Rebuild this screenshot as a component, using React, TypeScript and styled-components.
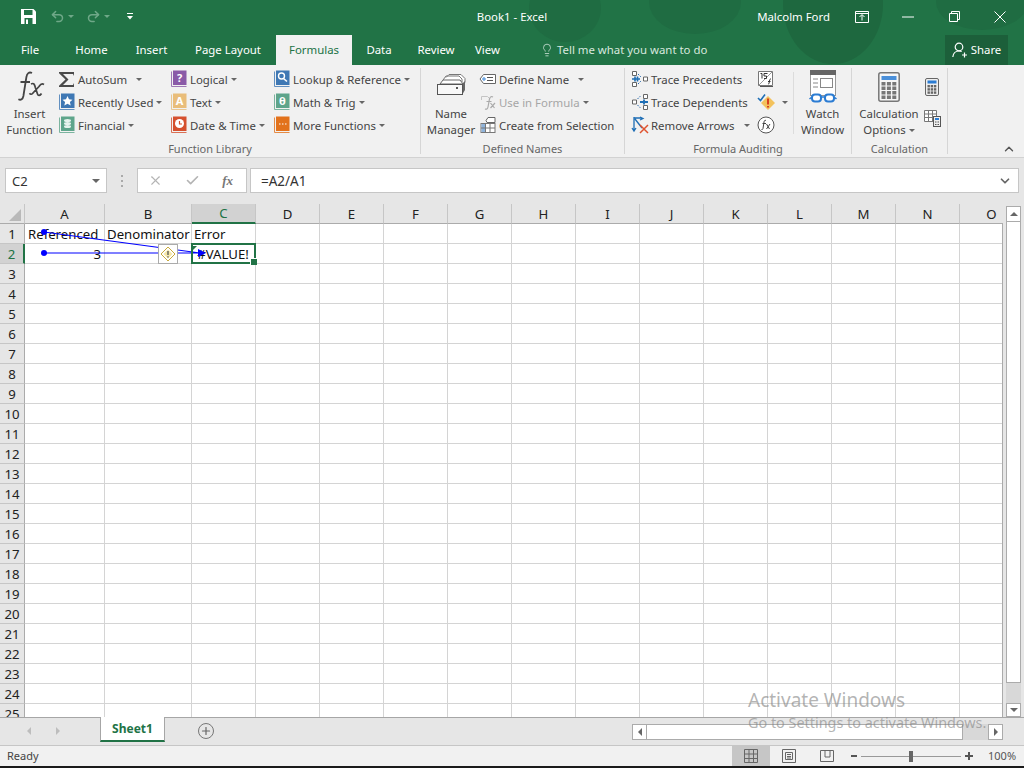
import React from 'react';
import styled, { createGlobalStyle } from 'styled-components';
import { Undo2, Redo2, Lightbulb, ChevronUp, ChevronDown, X, Check, Plus } from 'lucide-react';

const UI_FONT = '"Noto Sans", "Open Sans", "Liberation Sans", sans-serif';
const GREEN = '#217346';

const COLUMNS = ['A', 'B', 'C', 'D', 'E', 'F', 'G', 'H', 'I', 'J', 'K', 'L', 'M', 'N', 'O'];
const ROWS = Array.from({ length: 25 }, (_, i) => i + 1);
const CELLS: Record<string, { text: string; align?: 'left' | 'right' | 'center' }> = {
  A1: { text: 'Referenced' },
  B1: { text: 'Denominator' },
  C1: { text: 'Error' },
  A2: { text: '3', align: 'right' },
  C2: { text: '#VALUE!', align: 'center' },
};

const GlobalStyle = createGlobalStyle`
  html, body { margin: 0; padding: 0; background: #1a1a1a; }
  * { box-sizing: border-box; }
`;

const Book = ({ color, children }: { color: string; children?: React.ReactNode }) => (
  <svg width="17" height="18" viewBox="0 0 17 18">
    <path d="M1 1.500h1v14.500h14.500v1H2q-1 0-1-1z" fill={color} opacity="0.8" />
    <rect x="3" y="0.500" width="13.500" height="14.500" fill={color} />
    {children}
  </svg>
);

const BookLetter = styled.text`
  font: bold 11px ${UI_FONT};
  fill: #fff;
  text-anchor: middle;
`;

const Sigma = () => (
  <svg width="17" height="17" viewBox="0 0 17 17">
    <path d="M1 1h15v4l-1-2H5l5.500 5.500L5 14h10l1-2v4H1v-1.200L7.500 8.500 1 2.200z" fill="#4a4a4a" />
  </svg>
);

const FxLarge = () => (
  <svg width="34" height="34" viewBox="0 0 34 34">
    <path d="M19 3c-3-1.500-5 .5-5.600 4l-3 19c-.6 3-2.400 4.500-5 3.300M7.500 12h9.500" fill="none" stroke="#444" strokeWidth="1.800" />
    <path d="M18 14c3-1.500 3.600.5 4.500 4l2 6c.6 2 2.500 2 4-.5M31 14.500c-2-1.300-3.500-.3-5 2l-6 6.500c-1 1.400-2.500 1.800-3.500.3" fill="none" stroke="#444" strokeWidth="1.700" />
  </svg>
);

const NameManagerIcon = () => (
  <svg width="32" height="32" viewBox="0 0 32 32">
    <path d="M8 9l3-4h13l3 3v3M11 6.500l3-3h12l4 4v4" fill="#fff" stroke="#777" />
    <path d="M27 13l3-3v9l-3 5z" fill="#666" />
    <path d="M5 13l3-4h17l3 4z" fill="#fff" stroke="#666" />
    <rect x="2.500" y="13.500" width="25" height="10" fill="#f8f8f8" stroke="#555" />
    <rect x="21" y="16" width="2" height="2" fill="#555" />
  </svg>
);

const TagIcon = () => (
  <svg width="18" height="16" viewBox="0 0 18 16">
    <path d="M4.500 3.500H16.500v9H4.500L1 8z" fill="#fff" stroke="#666" />
    <circle cx="5" cy="8" r="1.200" fill="none" stroke="#2b7cd3" />
    <path d="M8 6.500h6M8 9.500h6" stroke="#555" />
  </svg>
);

const UseFormulaIcon = () => (
  <svg width="18" height="18" viewBox="0 0 18 18">
    <path d="M2.500 7V3.500h6l2 2" fill="none" stroke="#c4c4c4" />
    <path d="M14 4c-2-1-3 0-3.500 2l-1.500 8c-.4 2-1.500 2.500-3 2M7.500 8.500h5M11.500 10l4 5M16 10l-4.500 5" fill="none" stroke="#aaa" strokeWidth="1.200" />
  </svg>
);

const CreateSelectionIcon = () => (
  <svg width="18" height="18" viewBox="0 0 18 18">
    <path d="M7 4.500l2-3h7v5H8z" fill="#fff" stroke="#666" />
    <rect x="2" y="7.500" width="14" height="9" fill="#fff" stroke="#777" />
    <rect x="2.500" y="8" width="4" height="8" fill="#8fb4dc" />
    <path d="M6.500 8v8M11 8v8M2 12h14" stroke="#777" />
  </svg>
);

const TracePrecedentsIcon = () => (
  <svg width="18" height="18" viewBox="0 0 18 18">
    <path d="M1.500 1.500h4v4h-4zM1.500 12.500h4v4h-4zM12.500 7h4v4h-4z" fill="#fff" stroke="#666" />
    <path d="M7 4l3 3M7 14l3-3" stroke="#2b6cb0" strokeDasharray="1.500 1" />
    <path d="M1 9h8M6.500 6.500v5M4 6.500v5" stroke="#1e6eb5" strokeWidth="1.600" />
  </svg>
);

const TraceDependentsIcon = () => (
  <svg width="18" height="18" viewBox="0 0 18 18">
    <path d="M1.500 7h4v4h-4zM12.500 1.500h4v4h-4zM12.500 12.500h4v4h-4z" fill="#fff" stroke="#666" />
    <path d="M6.500 6l3-3M6.500 12l3 3" stroke="#2b6cb0" strokeDasharray="1.500 1" />
    <path d="M9 9h8M13 6.500v5" stroke="#1e6eb5" strokeWidth="1.800" />
  </svg>
);

const RemoveArrowsIcon = () => (
  <svg width="20" height="18" viewBox="0 0 20 18">
    <path d="M3 1v13M1 12l2 3 2-3M3 2h8M9 1l3 1.500L9 4M4 3l7 9" fill="none" stroke="#1e6eb5" strokeWidth="1.300" />
    <path d="M9 9l8 8M17 9l-8 8" stroke="#e0532f" strokeWidth="1.500" />
  </svg>
);

const ShowFormulasIcon = () => (
  <svg width="18" height="18" viewBox="0 0 18 18">
    <path d="M1.500 1.500h14v14l-14 0z" fill="#fff" stroke="#777" />
    <path d="M1.500 15.500L15.500 1.500" stroke="#999" />
    <path d="M3.500 3.500h1.500v5M7 3.500h3.500M7 3.500v2.500h2.500v2.500H7M11 14c1 0 1-.5 1.300-2l.4-2c.3-1.300 1-1 1.300-1M11 11.500h2.500" fill="none" stroke="#333" />
    <path d="M16 16.500H3" stroke="#555" />
  </svg>
);

const ErrorCheckIcon = () => (
  <svg width="20" height="18" viewBox="0 0 20 18">
    <path d="M1 5l2.500 2.500L8 1.500" fill="none" stroke="#1e6eb5" strokeWidth="1.600" />
    <path d="M11 3l7 7-7 7-7-7z" fill="#f3c25c" />
    <path d="M11 5.500v6M11 13v1.500" stroke="#d8401f" strokeWidth="2" />
  </svg>
);

const EvaluateIcon = () => (
  <svg width="18" height="18" viewBox="0 0 18 18">
    <circle cx="9" cy="9" r="8" fill="#fff" stroke="#555" />
    <path d="M9 4.500c-1.200-.5-1.800.2-2 1.500l-1 6.500c-.2 1-.8 1.200-1.500 1M5.500 7.500h3.500M9.500 8l3 5M13 8l-3.500 5" fill="none" stroke="#444" />
  </svg>
);

const WatchWindowIcon = () => (
  <svg width="28" height="36" viewBox="0 0 28 36">
    <rect x="1.500" y="1.500" width="25" height="25" fill="#fff" stroke="#999" />
    <rect x="1" y="1" width="26" height="5" fill="#666" />
    <rect x="11.500" y="9.500" width="12" height="9" fill="#fff" stroke="#888" />
    <path d="M4 10h5M4 14h5M4 18h5" stroke="#888" />
    <rect x="3" y="25.500" width="9" height="7" rx="3" fill="#fff" stroke="#2b7cd3" strokeWidth="2" />
    <rect x="16" y="25.500" width="9" height="7" rx="3" fill="#fff" stroke="#2b7cd3" strokeWidth="2" />
    <path d="M12 28h4M3 28L0.500 30M25 28l2.500 2" stroke="#2b7cd3" strokeWidth="1.600" />
  </svg>
);

const CalcLargeIcon = () => (
  <svg width="22" height="30" viewBox="0 0 22 30">
    <rect x="0.800" y="0.800" width="20.400" height="28.400" rx="2" fill="#f6f6f6" stroke="#777" strokeWidth="1.500" />
    <rect x="3.500" y="4" width="15" height="4" fill="#2b7cd3" opacity="0.85" />
    {[0, 1, 2].map((c) =>
      [0, 1, 2, 3].map((r) => <rect key={`${c}${r}`} x={3.5 + c * 5.4} y={10 + r * 4.5} width="4" height="3.500" fill="#777" />),
    )}
  </svg>
);

const CalcSmallIcon = () => (
  <svg width="14" height="18" viewBox="0 0 14 18">
    <rect x="0.500" y="0.500" width="13" height="17" rx="1.500" fill="#eee" stroke="#666" />
    <rect x="2.500" y="2.500" width="9" height="3" fill="#2b7cd3" />
    {[0, 1, 2].map((c) =>
      [0, 1, 2].map((r) => <rect key={`${c}${r}`} x={2.5 + c * 3.2} y={7 + r * 3.2} width="2.400" height="2.400" fill="#666" />),
    )}
  </svg>
);

const CalcSheetIcon = () => (
  <svg width="18" height="18" viewBox="0 0 18 18">
    <path d="M1.500 1.500h12v11h-12zM1.500 5h12M1.500 8.500h12M5.500 1.500v11M9.500 1.500v11" fill="#fff" stroke="#777" />
    <rect x="10.500" y="7.500" width="7" height="10" fill="#eee" stroke="#555" />
    <rect x="12" y="9" width="4" height="2" fill="#2b7cd3" />
    <path d="M12 13h1.500M14.500 13H16M12 15.500h1.500M14.500 15.500H16" stroke="#555" />
  </svg>
);

const Header = styled.header`
  position: relative;
  height: 65px;
  background: ${GREEN};
  color: #fff;
  overflow: hidden;
`;

const Blobs = styled.svg`
  position: absolute;
  inset: 0;
  pointer-events: none;
`;

const TitleBar = styled.div`
  position: relative;
  height: 35px;
  display: grid;
  grid-template-columns: 1fr auto 1fr;
  align-items: center;
  padding-bottom: 2px;
`;

const Qat = styled.div`
  display: flex;
  align-items: center;
  padding-left: 21px;
`;

const QatSlot = styled.span<{ $w: number }>`
  display: inline-flex;
  align-items: center;
  width: ${(p) => p.$w}px;
`;

const QatCaret = styled.span`
  width: 0;
  height: 0;
  margin-left: 3px;
  border: 3px solid transparent;
  border-top: 3px solid #6fa888;
  border-bottom: 0;
`;

const Title = styled.div`
  font: 11.4px ${UI_FONT};
`;

const TitleRight = styled.div`
  display: flex;
  align-items: center;
  justify-content: flex-end;
  font: 11.4px ${UI_FONT};
`;

const UserName = styled.span`
  margin-right: 25px;
`;

const WinButton = styled.span<{ $w: number; $mr?: number }>`
  display: inline-flex;
  justify-content: center;
  align-items: center;
  width: ${(p) => p.$w}px;
  margin-right: ${(p) => p.$mr ?? 0}px;
`;

const TabRow = styled.nav`
  position: relative;
  height: 30px;
  display: flex;
  align-items: stretch;
  font: 11.4px ${UI_FONT};
`;

const Tab = styled.div<{ $active?: boolean; $w: number }>`
  width: ${(p) => p.$w}px;
  padding-bottom: 1px;
  display: flex;
  align-items: center;
  justify-content: center;
  background: ${(p) => (p.$active ? '#f1f1f1' : 'transparent')};
  color: ${(p) => (p.$active ? GREEN : '#fff')};
`;

const TellMe = styled.div`
  display: flex;
  align-items: center;
  gap: 3px;
  margin-left: 31px;
  padding-bottom: 1px;
  color: #d8e8df;
  flex: 1;
`;

const ShareBox = styled.div`
  width: 63px;
  margin-right: 16px;
  padding-bottom: 1px;
  display: flex;
  align-items: center;
  justify-content: center;
  gap: 3px;
  background: #1c5f3a;
`;

const Ribbon = styled.section`
  position: relative;
  height: 93px;
  display: flex;
  background: #f1f1f1;
  border-bottom: 1px solid #d2d2d2;
  color: #444;
  font: 11.4px ${UI_FONT};
`;

const Group = styled.div<{ $w: number }>`
  position: relative;
  width: ${(p) => p.$w}px;
  margin-top: 3px;
  margin-bottom: 3px;
  display: flex;
  flex-direction: column;
  border-right: 1px solid #d6d6d6;
`;

const GroupBody = styled.div`
  display: flex;
  height: 74px;
`;

const GroupLabel = styled.div`
  height: 12px;
  line-height: 14px;
  text-align: center;
  font-size: 11px;
  color: #666;
`;

const BigButton = styled.div<{ $w: number; $ml?: number }>`
  width: ${(p) => p.$w}px;
  margin-left: ${(p) => p.$ml ?? 0}px;
  flex-shrink: 0;
  display: flex;
  flex-direction: column;
  align-items: center;
  text-align: center;
  line-height: 16px;
`;

const BigIcon = styled.div`
  height: 38px;
  display: flex;
  align-items: center;
  justify-content: center;
`;

const SmallCol = styled.div<{ $w: number }>`
  width: ${(p) => p.$w}px;
  flex-shrink: 0;
`;

const SmallBtn = styled.div<{ $disabled?: boolean }>`
  height: 23px;
  padding-bottom: 1px;
  display: flex;
  align-items: center;
  white-space: nowrap;
  color: ${(p) => (p.$disabled ? '#a6a6a6' : '#444')};
`;

const SmallIcon = styled.span`
  width: 20px;
  flex-shrink: 0;
  display: flex;
  align-items: center;
`;

const Caret = styled.span<{ $ml?: number }>`
  display: inline-block;
  width: 0;
  height: 0;
  margin-left: ${(p) => p.$ml ?? 3}px;
  vertical-align: middle;
  border: 3px solid transparent;
  border-top: 3px solid #666;
  border-bottom: 0;
`;

const VRule = styled.div`
  width: 1px;
  height: 62px;
  margin: 4px 6px 0 0;
  background: #dcdcdc;
  flex-shrink: 0;
`;

const CalcCol = styled.div`
  width: 18px;
  padding-top: 10px;
  display: flex;
  flex-direction: column;
  align-items: center;
  gap: 13px;
`;

const Collapse = styled.span`
  position: absolute;
  right: 8px;
  bottom: 1px;
  color: #555;
  display: flex;
`;

const FormulaArea = styled.div`
  height: 46px;
  display: flex;
  align-items: center;
  padding: 0 5px 1px;
  background: #e6e6e6;
  font: 13px ${UI_FONT};
  color: #333;
`;

const InputBox = styled.div`
  height: 25px;
  background: #fff;
  border: 1px solid #c6c6c6;
  display: flex;
  align-items: center;
`;

const NameBox = styled(InputBox)`
  width: 102px;
  padding: 0 6px;
  justify-content: space-between;
`;

const Grip = styled.span`
  width: 2px;
  height: 12px;
  margin: 0 14px 0 14px;
  background: repeating-linear-gradient(#aaa 0 2px, transparent 2px 5px);
`;

const FnButtons = styled(InputBox)`
  width: 110px;
  margin-right: 3px;
  justify-content: space-between;
  padding: 0 13px 0 10px;
  color: #b4b4b4;
`;

const FxText = styled.span`
  font: italic bold 13px "Liberation Serif", serif;
  color: #777;
`;

const FormulaInput = styled(InputBox)`
  flex: 1;
  padding: 0 6px 0 10px;
  justify-content: space-between;
  font-size: 13.5px;
`;

const SheetArea = styled.div`
  height: 513px;
  display: flex;
  background: #e6e6e6;
`;

const Sheet = styled.div`
  position: relative;
  width: 1003px;
  overflow: hidden;
  flex-shrink: 0;
  background: #fff;
  &::after {
    content: '';
    position: absolute;
    top: 19px;
    bottom: 0;
    right: 0;
    width: 1px;
    background: #ababab;
  }
`;

const SheetGrid = styled.div`
  width: 1024px;
  display: grid;
  grid-template-columns: 25px 80px 87px repeat(13, 64px);
  grid-auto-rows: 20px;
  font: 13.2px ${UI_FONT};
  color: #111;
`;

const Corner = styled.div`
  position: relative;
  background: #e6e6e6;
  border-right: 1px solid #c6c6c6;
  border-bottom: 1px solid #ababab;
  &::after {
    content: '';
    position: absolute;
    right: 3px;
    bottom: 2px;
    border-style: solid;
    border-width: 0 0 12px 12px;
    border-color: transparent transparent #b9b9b9 transparent;
  }
`;

const ColHead = styled.div<{ $sel?: boolean }>`
  display: flex;
  align-items: center;
  justify-content: center;
  background: ${(p) => (p.$sel ? '#d2d2d2' : '#e6e6e6')};
  color: ${(p) => (p.$sel ? GREEN : '#222')};
  border-right: 1px solid #c6c6c6;
  border-bottom: ${(p) => (p.$sel ? `2px solid ${GREEN}` : '1px solid #ababab')};
`;

const RowHead = styled.div<{ $sel?: boolean }>`
  display: flex;
  align-items: center;
  justify-content: center;
  padding-top: 1px;
  background: ${(p) => (p.$sel ? '#d2d2d2' : '#e6e6e6')};
  color: ${(p) => (p.$sel ? GREEN : '#222')};
  border-right: ${(p) => (p.$sel ? `2px solid ${GREEN}` : '1px solid #ababab')};
  border-bottom: 1px solid #c6c6c6;
`;

const Cell = styled.div<{ $align?: string; $first?: boolean }>`
  padding: 0 3px 0 ${(p) => (p.$first ? 3 : 2)}px;
  line-height: 21px;
  white-space: nowrap;
  text-align: ${(p) => p.$align ?? 'left'};
  border-right: 1px solid #d4d4d4;
  border-bottom: 1px solid #d4d4d4;
`;

const SelectedCell = styled.div`
  position: absolute;
  left: 191px;
  top: 39px;
  width: 65px;
  height: 21px;
  border: 2px solid ${GREEN};
  pointer-events: none;
  &::after {
    content: '';
    position: absolute;
    right: -3px;
    bottom: -3px;
    width: 6px;
    height: 6px;
    background: ${GREEN};
    border: 1px solid #fff;
    border-right: 0;
    border-bottom: 0;
  }
`;

const ErrorFlag = styled.span`
  position: absolute;
  left: 193px;
  top: 42px;
  border-style: solid;
  border-width: 4px 4px 0 0;
  border-color: ${GREEN} transparent transparent transparent;
`;

const Arrows = styled.svg`
  position: absolute;
  left: 0;
  top: 0;
  pointer-events: none;
`;

const SmartTag = styled.div`
  position: absolute;
  left: 158px;
  top: 40px;
  width: 20px;
  height: 20px;
  display: flex;
  align-items: center;
  justify-content: center;
  background: #fff;
  border: 1px solid #ababab;
`;

const VScroll = styled.div`
  flex: 1;
  display: flex;
  flex-direction: column;
  padding: 2px 3px 0;
`;

const ScrollBtn = styled.div<{ $h: number }>`
  height: ${(p) => p.$h}px;
  flex-shrink: 0;
  display: flex;
  align-items: center;
  justify-content: center;
  background: #fff;
  border: 1px solid #ababab;
`;

const VThumb = styled.div`
  height: 461px;
  background: #fff;
  border: 1px solid #ababab;
  border-top: 0;
  flex-shrink: 0;
`;

const VTrack = styled.div`
  flex: 1;
  background: #d8d8d8;
`;

const TriUp = styled.span`
  border: 4px solid transparent;
  border-bottom: 4px solid #666;
  border-top: 0;
`;

const TriDown = styled.span`
  border: 4px solid transparent;
  border-top: 4px solid #666;
  border-bottom: 0;
`;

const TriLeft = styled.span<{ $c?: string }>`
  border: 4px solid transparent;
  border-right: 4px solid ${(p) => p.$c ?? '#666'};
  border-left: 0;
`;

const TriRight = styled.span<{ $c?: string }>`
  border: 4px solid transparent;
  border-left: 4px solid ${(p) => p.$c ?? '#666'};
  border-right: 0;
`;

const SheetTabs = styled.div`
  height: 28px;
  display: flex;
  background: #e6e6e6;
  border-top: 1px solid #a6a6a6;
  font: 12px ${UI_FONT};
`;

const TabNav = styled.div`
  width: 100px;
  display: flex;
  align-items: center;
  padding: 0 0 2px 27px;
  gap: 25px;
  flex-shrink: 0;
`;

const SheetTab = styled.div`
  width: 65px;
  height: 25px;
  margin-top: -1px;
  display: flex;
  align-items: center;
  justify-content: center;
  background: #fff;
  border-left: 1px solid #a6a6a6;
  border-right: 1px solid #a6a6a6;
  border-bottom: 2px solid ${GREEN};
  color: ${GREEN};
  font-weight: 700;
`;

const AddSheet = styled.div`
  width: 16px;
  height: 16px;
  margin: 5px 0 0 33px;
  border: 1.5px solid #777;
  border-radius: 50%;
  color: #666;
  display: flex;
  align-items: center;
  justify-content: center;
`;

const HScroll = styled.div`
  margin: 6px 21px 0 auto;
  width: 371px;
  height: 16px;
  display: flex;
`;

const HBtn = styled.div`
  width: 15px;
  flex-shrink: 0;
  display: flex;
  align-items: center;
  justify-content: center;
  background: #fff;
  border: 1px solid #ababab;
`;

const HThumb = styled.div`
  width: 316px;
  background: #fff;
  border-top: 1px solid #ababab;
  border-bottom: 1px solid #ababab;
  border-right: 1px solid #ababab;
`;

const HTrack = styled.div`
  flex: 1;
  background: #d8d8d8;
`;

const StatusBar = styled.footer`
  height: 21px;
  display: flex;
  align-items: stretch;
  background: #f1f1f1;
  border-top: 1px solid #c6c6c6;
  color: #444;
  font: 11px ${UI_FONT};
`;

const Ready = styled.div`
  width: 732px;
  padding: 0 0 2px 7px;
  display: flex;
  align-items: center;
`;

const ViewBtn = styled.div<{ $active?: boolean }>`
  width: 38px;
  display: flex;
  align-items: center;
  justify-content: center;
  background: ${(p) => (p.$active ? '#c6c6c6' : 'transparent')};
`;

const ZoomArea = styled.div`
  flex: 1;
  display: flex;
  align-items: center;
  padding-left: 5px;
  color: #555;
`;

const ZoomTrack = styled.div`
  position: relative;
  width: 100px;
  height: 1px;
  margin: 0 4px;
  background: #999;
`;

const ZoomThumb = styled.span`
  position: absolute;
  left: 48px;
  top: -5px;
  width: 4px;
  height: 11px;
  background: #666;
`;

const ZoomValue = styled.span`
  margin-left: 15px;
  padding-bottom: 2px;
`;

const Taskbar = styled.div`
  height: 2px;
  background: #1a1a1a;
`;

const Watermark = styled.div`
  position: absolute;
  left: 748px;
  top: 688px;
  color: rgba(130, 130, 130, 0.6);
  font-family: ${UI_FONT};
  pointer-events: none;
`;

const WatermarkTitle = styled.div`
  font-size: 19px;
  line-height: 25px;
`;

const WatermarkSub = styled.div`
  font-size: 14.4px;
  line-height: 20px;
  white-space: nowrap;
`;

const Page = styled.div`
  position: relative;
  width: 1024px;
  height: 768px;
  overflow: hidden;
`;

const TABS: [string, number, boolean?][] = [
  ['File', 60],
  ['Home', 63],
  ['Insert', 57],
  ['Page Layout', 96],
  ['Formulas', 76, true],
  ['Data', 54],
  ['Review', 60],
  ['View', 43],
];

const App = () => (
  <Page>
    <GlobalStyle />
    <Header>
      <Blobs width="1024" height="65" viewBox="0 0 1024 65">
        <ellipse cx="565" cy="8" rx="36" ry="34" fill="#1f6c42" />
        <ellipse cx="695" cy="2" rx="46" ry="32" fill="#1f6c42" />
        <ellipse cx="833" cy="4" rx="50" ry="60" fill="#1e683f" />
        <ellipse cx="982" cy="2" rx="46" ry="28" fill="#1f6c42" />
      </Blobs>
      <TitleBar>
        <Qat>
          <QatSlot $w={29}>
            <svg width="15" height="15" viewBox="0 0 15 15">
              <path d="M0 0h12.500L15 2.500V15H0z" fill="#fff" />
              <rect x="3" y="1" width="8.500" height="5" fill={GREEN} />
              <rect x="3.500" y="9" width="8" height="6" fill={GREEN} />
              <rect x="5" y="10.500" width="2" height="4.500" fill="#fff" />
            </svg>
          </QatSlot>
          <QatSlot $w={36}>
            <Undo2 size={15} color="#6fa888" strokeWidth={2.4} />
            <QatCaret />
          </QatSlot>
          <QatSlot $w={41}>
            <Redo2 size={15} color="#6fa888" strokeWidth={2.4} />
            <QatCaret />
          </QatSlot>
          <svg width="7" height="7" viewBox="0 0 7 7">
            <path d="M0 0h6v1H0zM0 3h6L3 6.500z" fill="#fff" />
          </svg>
        </Qat>
        <Title>Book1 - Excel</Title>
        <TitleRight>
          <UserName>Malcolm Ford</UserName>
          <WinButton $w={14} $mr={15}>
            <svg width="14" height="12" viewBox="0 0 14 12">
              <path d="M.5.500h13v11H.500zM7 9.500V4M4.500 6L7 3.500 9.500 6M.5 2.500h13" fill="none" stroke="#fff" />
            </svg>
          </WinButton>
          <WinButton $w={48}>
            <svg width="12" height="2" viewBox="0 0 12 2">
              <path d="M0 1h12" stroke="#fff" />
            </svg>
          </WinButton>
          <WinButton $w={44}>
            <svg width="11" height="11" viewBox="0 0 11 11">
              <path d="M.5 2.500h8v8h-8zM2.500 2.500v-2h8v8h-2" fill="none" stroke="#fff" />
            </svg>
          </WinButton>
          <WinButton $w={48}>
            <svg width="12" height="12" viewBox="0 0 12 12">
              <path d="M.5.500l11 11M11.500.500l-11 11" stroke="#fff" />
            </svg>
          </WinButton>
        </TitleRight>
      </TitleBar>
      <TabRow>
        {TABS.map(([name, w, active]) => (
          <Tab key={name} $w={w} $active={active}>
            {name}
          </Tab>
        ))}
        <TellMe>
          <Lightbulb size={14} strokeWidth={1.3} />
          Tell me what you want to do
        </TellMe>
        <ShareBox>
          <svg width="16" height="16" viewBox="0 0 16 16">
            <circle cx="7" cy="5" r="3.800" fill="none" stroke="#fff" strokeWidth="1.200" />
            <path d="M.8 15c.5-4 3-6 6.200-6 1 0 2 .2 2.700.6M12.500 10.500v5M10 13h5" fill="none" stroke="#fff" strokeWidth="1.200" />
          </svg>
          Share
        </ShareBox>
      </TabRow>
    </Header>

    <Ribbon>
      <Group $w={421}>
        <GroupBody>
          <BigButton $w={49} $ml={5}>
            <BigIcon>
              <FxLarge />
            </BigIcon>
            Insert
            <br />
            Function
          </BigButton>
          <SmallCol $w={4} />
          <SmallCol $w={112}>
            <SmallBtn>
              <SmallIcon><Sigma /></SmallIcon>AutoSum<Caret $ml={9} />
            </SmallBtn>
            <SmallBtn>
              <SmallIcon>
                <Book color="#3f78b4">
                  <path d="M9.500 3l1.500 3.300 3.500.4-2.600 2.300.8 3.500-3.200-1.800-3.200 1.800.8-3.500-2.600-2.300 3.500-.4z" fill="#fff" />
                </Book>
              </SmallIcon>
              Recently Used<Caret />
            </SmallBtn>
            <SmallBtn>
              <SmallIcon>
                <Book color="#5ea58b">
                  <ellipse cx="9.500" cy="4.500" rx="3.500" ry="1.500" fill="#e8f3ee" />
                  <ellipse cx="9.500" cy="7.500" rx="3.500" ry="1.500" fill="#e8f3ee" />
                  <ellipse cx="9.500" cy="10.500" rx="3.500" ry="1.500" fill="#e8f3ee" />
                </Book>
              </SmallIcon>
              Financial<Caret />
            </SmallBtn>
          </SmallCol>
          <SmallCol $w={103}>
            <SmallBtn>
              <SmallIcon>
                <Book color="#8a5aa8"><BookLetter x="9.500" y="12">?</BookLetter></Book>
              </SmallIcon>
              Logical<Caret />
            </SmallBtn>
            <SmallBtn>
              <SmallIcon>
                <Book color="#e9bd7a"><BookLetter x="9.500" y="12">A</BookLetter></Book>
              </SmallIcon>
              Text<Caret />
            </SmallBtn>
            <SmallBtn>
              <SmallIcon>
                <Book color="#d5502e">
                  <circle cx="9.500" cy="7.500" r="4.500" fill="#fff" />
                  <path d="M9.500 5v3h2.500" fill="none" stroke="#d5502e" strokeWidth="1.200" />
                </Book>
              </SmallIcon>
              Date &amp; Time<Caret />
            </SmallBtn>
          </SmallCol>
          <SmallCol $w={140}>
            <SmallBtn>
              <SmallIcon>
                <Book color="#3f78b4">
                  <circle cx="8.500" cy="6" r="3" fill="none" stroke="#fff" strokeWidth="1.400" />
                  <path d="M10.500 8.500l3.500 3" stroke="#fff" strokeWidth="1.600" />
                </Book>
              </SmallIcon>
              Lookup &amp; Reference<Caret />
            </SmallBtn>
            <SmallBtn>
              <SmallIcon>
                <Book color="#5ea58b"><BookLetter x="9.500" y="12">θ</BookLetter></Book>
              </SmallIcon>
              Math &amp; Trig<Caret />
            </SmallBtn>
            <SmallBtn>
              <SmallIcon>
                <Book color="#e2721c">
                  <path d="M6 8h1.500M9 8h1.500M12 8h1.500" stroke="#fff" strokeWidth="1.200" />
                </Book>
              </SmallIcon>
              More Functions<Caret />
            </SmallBtn>
          </SmallCol>
        </GroupBody>
        <GroupLabel>Function Library</GroupLabel>
      </Group>

      <Group $w={204}>
        <GroupBody>
          <BigButton $w={50} $ml={5}>
            <BigIcon>
              <NameManagerIcon />
            </BigIcon>
            Name
            <br />
            Manager
          </BigButton>
          <SmallCol $w={3} />
          <SmallCol $w={140}>
            <SmallBtn>
              <SmallIcon><TagIcon /></SmallIcon>Define Name<Caret $ml={9} />
            </SmallBtn>
            <SmallBtn $disabled>
              <SmallIcon><UseFormulaIcon /></SmallIcon>Use in Formula<Caret />
            </SmallBtn>
            <SmallBtn>
              <SmallIcon><CreateSelectionIcon /></SmallIcon>Create from Selection
            </SmallBtn>
          </SmallCol>
        </GroupBody>
        <GroupLabel>Defined Names</GroupLabel>
      </Group>

      <Group $w={227}>
        <GroupBody>
          <SmallCol $w={6} />
          <SmallCol $w={126}>
            <SmallBtn>
              <SmallIcon><TracePrecedentsIcon /></SmallIcon>Trace Precedents
            </SmallBtn>
            <SmallBtn>
              <SmallIcon><TraceDependentsIcon /></SmallIcon>Trace Dependents
            </SmallBtn>
            <SmallBtn>
              <SmallIcon><RemoveArrowsIcon /></SmallIcon>Remove Arrows<Caret $ml={9} />
            </SmallBtn>
          </SmallCol>
          <SmallCol $w={36}>
            <SmallBtn><ShowFormulasIcon /></SmallBtn>
            <SmallBtn><ErrorCheckIcon /><Caret $ml={5} /></SmallBtn>
            <SmallBtn><EvaluateIcon /></SmallBtn>
          </SmallCol>
          <VRule />
          <BigButton $w={45}>
            <BigIcon>
              <WatchWindowIcon />
            </BigIcon>
            Watch
            <br />
            Window
          </BigButton>
        </GroupBody>
        <GroupLabel>Formula Auditing</GroupLabel>
      </Group>

      <Group $w={96}>
        <GroupBody>
          <BigButton $w={68} $ml={3}>
            <BigIcon>
              <CalcLargeIcon />
            </BigIcon>
            Calculation
            <br />
            <span>Options<Caret /></span>
          </BigButton>
          <CalcCol>
            <CalcSmallIcon />
            <CalcSheetIcon />
          </CalcCol>
        </GroupBody>
        <GroupLabel>Calculation</GroupLabel>
      </Group>

      <Collapse>
        <ChevronUp size={14} strokeWidth={2.4} />
      </Collapse>
    </Ribbon>

    <FormulaArea>
      <NameBox>
        C2
        <TriDown />
      </NameBox>
      <Grip />
      <FnButtons>
        <X size={15} strokeWidth={1.8} />
        <Check size={15} strokeWidth={2.6} />
        <FxText>fx</FxText>
      </FnButtons>
      <FormulaInput>
        =A2/A1
        <ChevronDown size={14} strokeWidth={3} color="#666" />
      </FormulaInput>
    </FormulaArea>

    <SheetArea>
      <Sheet>
        <SheetGrid>
          <Corner />
          {COLUMNS.map((c) => (
            <ColHead key={c} $sel={c === 'C'}>{c}</ColHead>
          ))}
          {ROWS.map((r) => (
            <React.Fragment key={r}>
              <RowHead $sel={r === 2}>{r}</RowHead>
              {COLUMNS.map((c) => {
                const cell = CELLS[`${c}${r}`];
                return (
                  <Cell key={c} $align={cell?.align} $first={c === 'A'}>
                    {cell?.text}
                  </Cell>
                );
              })}
            </React.Fragment>
          ))}
        </SheetGrid>
        <Arrows width="300" height="70" viewBox="0 0 300 70">
          <path d="M44 28L200 49M44 49H200" stroke="#0000ff" strokeWidth="1.200" />
          <circle cx="44" cy="28" r="3" fill="#0000ff" />
          <circle cx="44" cy="49" r="3" fill="#0000ff" />
          <path d="M198 45l8 4-8 4z" fill="#0000ff" />
        </Arrows>
        <SelectedCell />
        <ErrorFlag />
        <SmartTag>
          <svg width="16" height="16" viewBox="0 0 16 16">
            <path d="M8 1l7 7-7 7-7-7z" fill="#fff" stroke="#c9a93a" />
            <path d="M8 3.500l4.500 4.500L8 12.500 3.500 8z" fill="#f6e8a8" />
            <path d="M8 5v4M8 10.200v1.300" stroke="#555" strokeWidth="1.300" />
          </svg>
        </SmartTag>
      </Sheet>
      <VScroll>
        <ScrollBtn $h={16}><TriUp /></ScrollBtn>
        <VThumb />
        <VTrack />
        <ScrollBtn $h={14}><TriDown /></ScrollBtn>
      </VScroll>
    </SheetArea>

    <SheetTabs>
      <TabNav>
        <TriLeft $c="#bdbdbd" />
        <TriRight $c="#bdbdbd" />
      </TabNav>
      <SheetTab>Sheet1</SheetTab>
      <AddSheet>
        <Plus size={12} strokeWidth={2.4} />
      </AddSheet>
      <HScroll>
        <HBtn><TriLeft /></HBtn>
        <HThumb />
        <HTrack />
        <HBtn><TriRight /></HBtn>
      </HScroll>
    </SheetTabs>

    <StatusBar>
      <Ready>Ready</Ready>
      <ViewBtn $active>
        <svg width="14" height="14" viewBox="0 0 14 14">
          <path d="M.5.500h13v13H.500zM.5 5h13M.5 9.500h13M5 .500v13M9.500.500v13" fill="none" stroke="#666" />
        </svg>
      </ViewBtn>
      <ViewBtn>
        <svg width="14" height="14" viewBox="0 0 14 14">
          <path d="M.5.500h13v13H.500zM3.500 3.500h7v7h-7zM5 5.500h4M5 7.500h4M5 9h4" fill="none" stroke="#666" />
        </svg>
      </ViewBtn>
      <ViewBtn>
        <svg width="14" height="12" viewBox="0 0 14 12">
          <path d="M.5.500h13v11H.500zM5 .500v6.500h5V.500" fill="none" stroke="#666" />
        </svg>
      </ViewBtn>
      <ZoomArea>
        <svg width="6" height="2" viewBox="0 0 6 2">
          <path d="M0 1h6" stroke="#555" strokeWidth="2" />
        </svg>
        <ZoomTrack>
          <ZoomThumb />
        </ZoomTrack>
        <svg width="8" height="8" viewBox="0 0 8 8">
          <path d="M0 4h8M4 0v8" stroke="#555" strokeWidth="2" />
        </svg>
        <ZoomValue>100%</ZoomValue>
      </ZoomArea>
    </StatusBar>
    <Taskbar />

    <Watermark>
      <WatermarkTitle>Activate Windows</WatermarkTitle>
      <WatermarkSub>Go to Settings to activate Windows.</WatermarkSub>
    </Watermark>
  </Page>
);

export default App;
